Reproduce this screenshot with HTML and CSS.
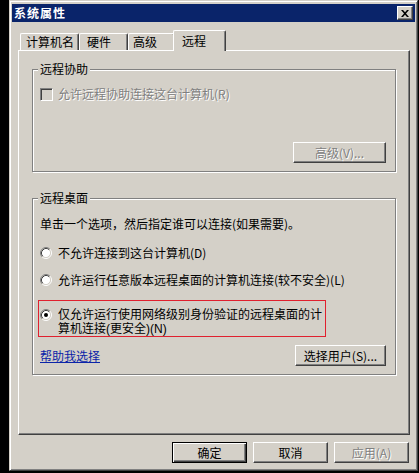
FILE: index.html
```html
<!DOCTYPE html>
<html lang="zh-CN">
<head>
<meta charset="utf-8">
<title>系统属性</title>
<link rel="stylesheet" href="styles.css">
</head>
<body>
<div class="window">
  <div class="titlebar">
    <span class="title">系统属性</span>
    <span class="close"><svg width="8" height="7" viewBox="0 0 8 7"><path d="M0 0h2l2 2.3L6 0h2L5 3.5 8 7H6L4 4.7 2 7H0l3-3.5z" fill="#000"/></svg></span>
  </div>
  <div class="tabs">
    <div class="tab t1">计算机名</div>
    <div class="tab t2">硬件</div>
    <div class="tab t3">高级</div>
    <div class="tab active">远程</div>
  </div>
  <div class="panel">
    <div class="group g1">
      <div class="legend">远程协助</div>
      <div class="check-row">
        <span class="cb"></span>
        <span class="dis">允许远程协助连接这台计算机(R)</span>
      </div>
      <div class="btn-row"><button class="btn dis adv">高级(V)...</button></div>
    </div>
    <div class="group g2">
      <div class="legend">远程桌面</div>
      <div class="intro">单击一个选项，然后指定谁可以连接(如果需要)。</div>
      <div class="radio-row r1">
        <svg class="radio" width="12" height="12" viewBox="0 0 12 12"><circle cx="6" cy="6" r="4.5" fill="#fff"/><path d="M2.11 9.89A5.5 5.5 0 0 1 9.89 2.11" fill="none" stroke="#808080"/><path d="M9.89 2.11A5.5 5.5 0 0 1 2.11 9.89" fill="none" stroke="#fff"/><path d="M2.82 9.18A4.5 4.5 0 0 1 9.18 2.82" fill="none" stroke="#404040"/><path d="M9.18 2.82A4.5 4.5 0 0 1 2.82 9.18" fill="none" stroke="#d4d0c8"/></svg>
        <span>不允许连接到这台计算机(D)</span>
      </div>
      <div class="radio-row r2">
        <svg class="radio" width="12" height="12" viewBox="0 0 12 12"><circle cx="6" cy="6" r="4.5" fill="#fff"/><path d="M2.11 9.89A5.5 5.5 0 0 1 9.89 2.11" fill="none" stroke="#808080"/><path d="M9.89 2.11A5.5 5.5 0 0 1 2.11 9.89" fill="none" stroke="#fff"/><path d="M2.82 9.18A4.5 4.5 0 0 1 9.18 2.82" fill="none" stroke="#404040"/><path d="M9.18 2.82A4.5 4.5 0 0 1 2.82 9.18" fill="none" stroke="#d4d0c8"/></svg>
        <span>允许运行任意版本远程桌面的计算机连接(较不安全)(L)</span>
      </div>
      <div class="hilite">
        <div class="radio-row r3">
          <svg class="radio" width="12" height="12" viewBox="0 0 12 12"><circle cx="6" cy="6" r="4.5" fill="#fff"/><path d="M2.11 9.89A5.5 5.5 0 0 1 9.89 2.11" fill="none" stroke="#808080"/><path d="M9.89 2.11A5.5 5.5 0 0 1 2.11 9.89" fill="none" stroke="#fff"/><path d="M2.82 9.18A4.5 4.5 0 0 1 9.18 2.82" fill="none" stroke="#404040"/><path d="M9.18 2.82A4.5 4.5 0 0 1 2.82 9.18" fill="none" stroke="#d4d0c8"/><circle cx="6" cy="6" r="2" fill="#000"/></svg>
          <span class="r3-text">仅允许运行使用网络级别身份验证的远程桌面的计<br>算机连接(更安全)(N)</span>
        </div>
      </div>
      <div class="foot-row">
        <a class="link" href="#">帮助我选择</a>
        <button class="btn users">选择用户(S)...</button>
      </div>
    </div>
  </div>
  <div class="buttons">
    <button class="btn default">确定</button>
    <button class="btn">取消</button>
    <button class="btn dis">应用(A)</button>
  </div>
</div>
</body>
</html>
```
FILE: styles.css
```css
html, body {
  margin: 0;
  background: #000;
}
body {
  font-family: "Noto Sans CJK SC", "Noto Sans", sans-serif;
  font-size: 12px;
  line-height: 14px;
  color: #000;
}
.window {
  box-sizing: border-box;
  margin-left: 9px;
  width: 409px;
  height: 471px;
  background: #d4d0c8;
  border: 1px solid;
  border-color: #d4d0c8 #404040 #404040 #d4d0c8;
  box-shadow: inset 1px 1px 0 #fff, inset -1px -1px 0 #808080;
  padding: 3px 2px 2px 2px;
}
.titlebar {
  height: 18px;
  background: #0a246a;
  display: flex;
  align-items: center;
  justify-content: space-between;
  padding: 0 2px;
}
.title {
  color: #fff;
  font-weight: bold;
  letter-spacing: 1px;
}
.close {
  box-sizing: border-box;
  width: 16px;
  height: 14px;
  border: 1px solid;
  border-color: #fff #404040 #404040 #fff;
  box-shadow: inset -1px -1px 0 #808080;
  background: #d4d0c8;
  display: flex;
  align-items: center;
  justify-content: center;
}
.tabs {
  display: flex;
  align-items: flex-end;
  height: 21px;
  margin: 8px 0 -1px 6px;
  padding-left: 2px;
  position: relative;
  z-index: 1;
}
.tab {
  box-sizing: border-box;
  height: 17px;
  margin-bottom: 1px;
  padding-top: 1px;
  border-top: 1px solid #fff;
  border-left: 1px solid #fff;
  border-right: 1px solid #404040;
  border-radius: 2px 2px 0 0;
  box-shadow: inset -1px 0 0 #808080;
  background: #d4d0c8;
  white-space: nowrap;
}
.t1 { width: 59px; padding-left: 5px; }
.t2 { width: 49px; padding-left: 7px; }
.t3 { width: 47px; padding-left: 4px; }
.tab.active {
  width: 53px;
  height: 21px;
  margin-bottom: 0;
  margin-left: -2px;
  padding-left: 8px;
  padding-top: 3px;
  position: relative;
}
.panel {
  box-sizing: border-box;
  height: 385px;
  margin: 0 5px 0 6px;
  border: 1px solid;
  border-color: #fff #404040 #404040 #fff;
  box-shadow: inset -1px -1px 0 #808080;
  padding-top: 18px;
}
.group {
  box-sizing: border-box;
  width: 364px;
  margin-left: 13px;
  border: 1px solid #808080;
  box-shadow: inset 1px 1px 0 #fff, 1px 1px 0 #fff;
  padding: 0 9px 8px 7px;
}
.g1 { padding-bottom: 8px; }
.g2 { margin-top: 26px; }
.legend {
  width: fit-content;
  margin: -8px 0 0 -2px;
  padding: 0 2px;
  background: #d4d0c8;
}
.check-row {
  display: flex;
  align-items: center;
  gap: 5px;
  height: 14px;
  margin-top: 11px;
}
.cb {
  box-sizing: border-box;
  width: 13px;
  height: 13px;
  border: 1px solid;
  border-color: #808080 #fff #fff #808080;
  box-shadow: inset 1px 1px 0 #404040, inset -1px -1px 0 #d4d0c8;
  background: #d4d0c8;
}
.dis {
  color: #808080;
  text-shadow: 1px 1px 0 #fff;
}
.btn-row {
  display: flex;
  justify-content: flex-end;
  margin-top: 41px;
}
.btn {
  box-sizing: border-box;
  height: 21px;
  width: 75px;
  padding: 0;
  font: inherit;
  color: #000;
  background: #d4d0c8;
  border: 1px solid;
  border-color: #fff #404040 #404040 #fff;
  box-shadow: inset -1px -1px 0 #808080;
}
.btn.dis { color: #808080; }
.adv { width: 93px; }
.users { width: 91px; }
.intro { margin-top: 12px; }
.radio-row {
  display: flex;
  align-items: center;
  gap: 6px;
  height: 14px;
}
.radio { flex: none; }
.r1 { margin-top: 15px; }
.r2 { margin-top: 13px; }
.hilite {
  box-sizing: border-box;
  width: 288px;
  margin: 13px 0 0 -2px;
  border: 1px solid #e0202e;
  padding: 7px 0 0 1px;
}
.r3 {
  height: auto;
  align-items: flex-start;
  line-height: 14px;
}
.r3-text {
  font-family: "Liberation Sans", "Noto Sans CJK SC", sans-serif;
}
.r3 .radio { margin-top: 1px; }
.foot-row {
  display: flex;
  justify-content: space-between;
  align-items: center;
  margin-top: 8px;
}
.link {
  color: #0b24a8;
  text-decoration: underline;
}
.buttons {
  display: flex;
  justify-content: flex-end;
  gap: 6px;
  margin-top: 7px;
  padding-right: 6px;
}
.btn.default {
  border: 1px solid #000;
  box-shadow: inset 1px 1px 0 #fff, inset -1px -1px 0 #404040, inset -2px -2px 0 #808080;
}
```
